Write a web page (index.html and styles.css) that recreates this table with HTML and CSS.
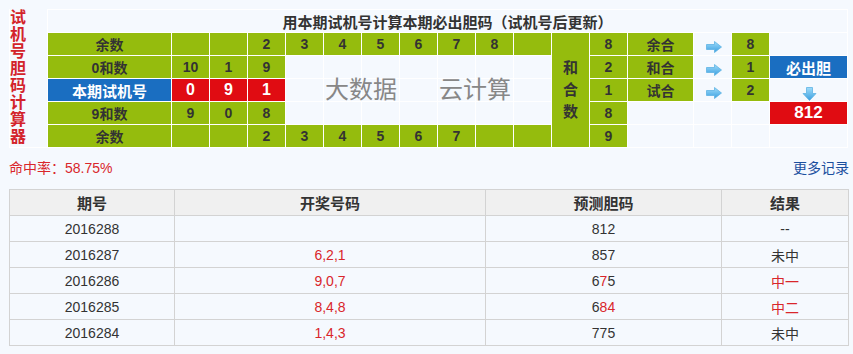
FILE: index.html
```html
<!DOCTYPE html>
<html lang="zh">
<head>
<meta charset="utf-8">
<title>试机号胆码计算器</title>
<link rel="stylesheet" href="styles.css">
</head>
<body>
<div class="page">
  <div class="calc">
    <div class="side">试<br>机<br>号<br>胆<br>码<br>计<br>算<br>器</div>
    <div class="cell title">用本期试机号计算本期必出胆码（试机号后更新）</div>

    <div class="cell g lbl">余数</div>
    <div class="cell g"></div><div class="cell g"></div>
    <div class="cell g">2</div><div class="cell g">3</div><div class="cell g">4</div><div class="cell g">5</div>
    <div class="cell g">6</div><div class="cell g">7</div><div class="cell g">8</div><div class="cell g"></div>
    <div class="cell g hh"><span class="vt">和<br>合<br>数</span></div>
    <div class="cell g">8</div>
    <div class="cell g">余合</div>
    <div class="cell arr"><svg class="ra" width="16" height="12" viewBox="0 0 16 12"><defs><linearGradient id="ga" x1="0" y1="0" x2="0" y2="1"><stop offset="0" stop-color="#9fdcfa"/><stop offset="1" stop-color="#3a9fe0"/></linearGradient></defs><polygon points="0.5,3.5 8.5,3.5 8.5,0.5 15.5,6 8.5,11.5 8.5,8.5 0.5,8.5" fill="url(#ga)" stroke="#5eb3e3" stroke-width="0.8"/></svg></div>
    <div class="cell g">8</div>
    <div class="cell"></div>

    <div class="cell g lbl">0和数</div>
    <div class="cell g">10</div><div class="cell g">1</div><div class="cell g">9</div>
    <div class="cell"></div><div class="cell"></div><div class="cell"></div><div class="cell"></div>
    <div class="cell"></div><div class="cell"></div><div class="cell"></div>
    <div class="cell g">2</div>
    <div class="cell g">和合</div>
    <div class="cell arr"><svg class="ra" width="16" height="12" viewBox="0 0 16 12"><polygon points="0.5,3.5 8.5,3.5 8.5,0.5 15.5,6 8.5,11.5 8.5,8.5 0.5,8.5" fill="url(#ga)" stroke="#5eb3e3" stroke-width="0.8"/></svg></div>
    <div class="cell g">1</div>
    <div class="cell blue">必出胆</div>

    <div class="cell blue lbl2">本期试机号</div>
    <div class="cell red">0</div><div class="cell red">9</div><div class="cell red">1</div>
    <div class="cell"></div><div class="cell"></div><div class="cell"></div><div class="cell"></div>
    <div class="cell"></div><div class="cell"></div><div class="cell"></div>
    <div class="cell g">1</div>
    <div class="cell g">试合</div>
    <div class="cell arr"><svg class="ra" width="16" height="12" viewBox="0 0 16 12"><polygon points="0.5,3.5 8.5,3.5 8.5,0.5 15.5,6 8.5,11.5 8.5,8.5 0.5,8.5" fill="url(#ga)" stroke="#5eb3e3" stroke-width="0.8"/></svg></div>
    <div class="cell g">2</div>
    <div class="cell darr"><svg width="15" height="14" viewBox="0 0 15 14"><polygon points="4.5,0.5 10.5,0.5 10.5,6.5 14,6.5 7.5,13.5 1,6.5 4.5,6.5" fill="url(#ga)" stroke="#5eb3e3" stroke-width="0.8"/></svg></div>

    <div class="cell g lbl">9和数</div>
    <div class="cell g">9</div><div class="cell g">0</div><div class="cell g">8</div>
    <div class="cell"></div><div class="cell"></div><div class="cell"></div><div class="cell"></div>
    <div class="cell"></div><div class="cell"></div><div class="cell"></div>
    <div class="cell g">8</div>
    <div class="cell"></div><div class="cell"></div><div class="cell"></div>
    <div class="cell red big">812</div>

    <div class="cell g lbl">余数</div>
    <div class="cell g"></div><div class="cell g"></div>
    <div class="cell g">2</div><div class="cell g">3</div><div class="cell g">4</div><div class="cell g">5</div>
    <div class="cell g">6</div><div class="cell g">7</div><div class="cell g"></div><div class="cell g"></div>
    <div class="cell g">9</div>
    <div class="cell"></div><div class="cell"></div><div class="cell"></div><div class="cell"></div>

    <span class="wm wm1">大数据</span>
    <span class="wm wm2">云计算</span>
  </div>

  <div class="stats">
    <span class="rate">命中率：58.75%</span>
    <a class="more" href="#">更多记录</a>
  </div>

  <table class="hist">
    <colgroup>
      <col class="c1"><col class="c2"><col class="c3"><col class="c4">
    </colgroup>
    <thead>
      <tr><th>期号</th><th>开奖号码</th><th>预测胆码</th><th>结果</th></tr>
    </thead>
    <tbody>
      <tr><td>2016288</td><td></td><td>812</td><td>--</td></tr>
      <tr><td>2016287</td><td class="r">6,2,1</td><td>857</td><td>未中</td></tr>
      <tr><td>2016286</td><td class="r">9,0,7</td><td>6<span class="r">7</span>5</td><td class="r">中一</td></tr>
      <tr><td>2016285</td><td class="r">8,4,8</td><td>6<span class="r">84</span></td><td class="r">中二</td></tr>
      <tr><td>2016284</td><td class="r">1,4,3</td><td>775</td><td>未中</td></tr>
    </tbody>
  </table>
</div>
</body>
</html>
```

FILE: styles.css
```css
body {
  margin: 0;
  background: #f5f9fe;
  font-family: "Liberation Sans", "Noto Sans CJK SC", sans-serif;
  color: #333;
}

.page {
  padding: 9px 0 0 9px;
  width: 839px;
}

.calc {
  position: relative;
  display: grid;
  grid-template-columns: 37px 123px repeat(10, 37px) 37px 37px 65px 37px 37px 77px;
  grid-template-rows: repeat(6, 22px);
  gap: 1px;
  padding: 1px;
  background: #fff;
  width: max-content;
}

.side {
  grid-row: 1 / 7;
  background: #f5f9fe;
  color: #d3232a;
  font-size: 16px;
  line-height: 17px;
  font-weight: bold;
  margin-top: -1px;
}

.cell {
  display: flex;
  align-items: center;
  justify-content: center;
  background: #f5f9fe;
  font-size: 14px;
  font-weight: bold;
  color: #333;
}

.title {
  grid-column: 2 / -1;
  font-size: 15px;
}

.g { background: #95bc0d; }

.hh { grid-row: span 5; }

.vt {
  display: block;
  text-align: center;
  font-size: 15px;
  line-height: 22px;
}

.blue {
  background: #1a6ec1;
  color: #fff;
  font-size: 15px;
}

.red {
  background: #e00c12;
  color: #fff;
  font-size: 16px;
}

.big { font-size: 17px; }

.arr {
  align-items: flex-end;
  padding-bottom: 2px;
  padding-left: 2px;
}

.darr {
  align-items: flex-end;
  padding-left: 2px;
}

.wm {
  position: absolute;
  top: 67px;
  font-size: 24px;
  line-height: 24px;
  color: #878787;
  font-family: "Noto Sans CJK SC", sans-serif;
  font-weight: normal;
}
.wm1 { left: 316px; }
.wm2 { left: 430px; }

.stats {
  display: flex;
  justify-content: space-between;
  margin-top: 10px;
  font-size: 14px;
  line-height: 20px;
}

.rate { color: #d9262b; }

.more {
  color: #1b4f9e;
  text-decoration: none;
  margin-right: -1px;
}

.hist {
  width: 839px;
  margin-top: 11px;
  border-collapse: collapse;
  table-layout: fixed;
  font-size: 14px;
}

.c1 { width: 165px; }
.c2 { width: 311px; }
.c3 { width: 236px; }
.c4 { width: 127px; }

.hist th,
.hist td {
  border: 1px solid #d3d3d3;
  height: 25px;
  padding: 0;
  text-align: center;
  color: #333;
}

.hist th {
  background: #f0f0f0;
  font-size: 15px;
  font-weight: bold;
}

.hist .r { color: #d9262b; }
```
